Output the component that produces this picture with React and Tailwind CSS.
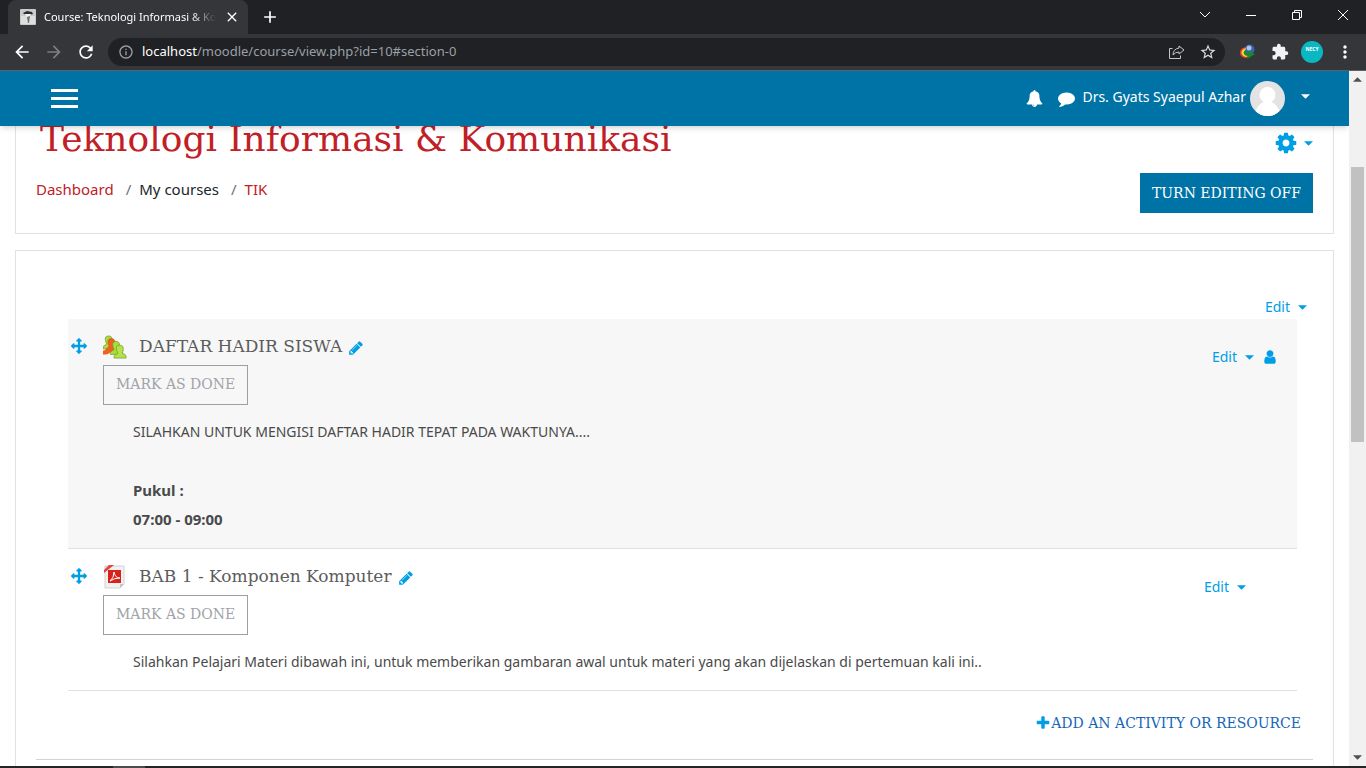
import React from 'react';
import { MdArrowBack, MdArrowForward, MdRefresh, MdInfoOutline, MdStarBorder, MdExtension, MdMoreVert, MdClose, MdAdd } from 'react-icons/md';

const ICONS = {
    cog: 'M1152 896q0-106-75-181t-181-75-181 75-75 181 75 181 181 75 181-75 75-181zm512-109v222q0 12-8 23t-20 13l-185 28q-19 54-39 91 35 50 107 138 10 12 10 25t-9 23q-27 37-99 108t-94 71q-12 0-26-9l-138-108q-44 23-91 38-16 136-29 186-7 28-36 28h-222q-14 0-24.5-8.5t-11.5-21.5l-28-184q-49-16-90-37l-141 107q-10 9-25 9-14 0-25-11-126-114-165-168-7-10-7-23 0-12 8-23 15-21 51-66.5t54-70.5q-27-50-41-99l-183-27q-13-2-21-12.5t-8-23.5v-222q0-12 8-23t19-13l186-28q14-46 39-92-40-57-107-138-10-12-10-24 0-10 9-23 26-36 98.5-107.5t94.5-71.5q13 0 26 10l138 107q44-23 91-38 16-136 29-186 7-28 36-28h222q14 0 24.5 8.5t11.5 21.5l28 184q49 16 90 37l142-107q9-9 24-9 13 0 25 10 129 119 165 170 7 8 7 22 0 12-8 23-15 21-51 66.5t-54 70.5q26 50 41 98l183 28q13 2 21 12.5t8 23.5z',
    pencil: 'M491 1536l91-91-235-235-91 91v107h128v128h107zm523-928q0-22-22-22-10 0-17 7l-542 542q-7 7-7 17 0 22 22 22 10 0 17-7l542-542q7-7 7-17zm-54-192l416 416-832 832h-416v-416zm683 96q0 53-37 90l-166 166-416-416 166-165q36-38 90-38 53 0 91 38l235 234q37 39 37 91z',
    user: 'M1536 1399q0 109-62.5 187t-150.5 78h-854q-88 0-150.5-78t-62.5-187q0-85 8.5-160.5t31.5-152 58.5-131 94-89 134.5-34.5q131 128 313 128t313-128q76 0 134.5 34.5t94 89 58.5 131 31.5 152 8.5 160.5zm-256-887q0 159-112.5 271.5t-271.5 112.5-271.5-112.5-112.5-271.5 112.5-271.5 271.5-112.5 271.5 112.5 112.5 271.5z',
    plus: 'M1600 736v192q0 40-28 68t-68 28h-416v416q0 40-28 68t-68 28h-192q-40 0-68-28t-28-68v-416h-416q-40 0-68-28t-28-68v-192q0-40 28-68t68-28h416v-416q0-40 28-68t68-28h192q40 0 68 28t28 68v416h416q40 0 68 28t28 68z',
    arrows: 'M1792 896q0 26-19 45l-256 256q-19 19-45 19t-45-19-19-45v-128h-384v384h128q26 0 45 19t19 45-19 45l-256 256q-19 19-45 19t-45-19l-256-256q-19-19-19-45t19-45 45-19h128v-384h-384v128q0 26-19 45t-45 19-45-19l-256-256q-19-19-19-45t19-45l256-256q19-19 45-19t45 19 19 45v128h384v-384h-128q-26 0-45-19t-19-45 19-45l256-256q19-19 45-19t45 19l256 256q19 19 19 45t-19 45-45 19h-128v384h384v-128q0-26 19-45t45-19 45 19l256 256q19 19 19 45z',
    bell: 'M912 1696q0-16-16-16-59 0-101.5-42.5t-42.5-101.5q0-16-16-16t-16 16q0 73 51.5 124.5t124.5 51.5q16 0 16-16zm816-288q0 52-38 90t-90 38h-448q0 106-75 181t-181 75-181-75-75-181h-448q-52 0-90-38t-38-90q50-42 91-88t85-119.5 74.5-158.5 50-206 19.5-260q0-152 117-282.5t307-158.5q-8-19-8-39 0-40 28-68t68-28 68 28 28 68q0 20-8 39 190 28 307 158.5t117 282.5q0 139 19.5 260t50 206 74.5 158.5 85 119.5 91 88z',
    comment: 'M1792 896q0 174-120 321.5t-326 233-450 85.5q-70 0-145-8-198 175-460 242-49 14-114 22-17 2-30.5-9t-17.5-29v-1q-3-4-.5-12t2-10 4.5-9.5l6-9 7-8.5 8-9q7-8 31-34.5t34.5-38 31-39.5 32.5-51 27-59 26-76q-157-89-247.5-220t-90.5-281q0-130 71-248.5t191-204.5 286-136.5 348-50.5q244 0 450 85.5t326 233 120 321.5z',
};

function Icon({ name, className }) {
    return (
        <svg viewBox="0 0 1792 1792" fill="currentColor" aria-hidden="true" className={className}>
            <path d={ICONS[name]} />
        </svg>
    );
}

function Caret() {
    return (
        <svg viewBox="0 0 10 5" fill="currentColor" aria-hidden="true" className="w-[9px] h-[5px] shrink-0">
            <path d="M0 0h10L5 5z" />
        </svg>
    );
}

function TabStrip() {
    return (
        <div className="flex h-[34px] shrink-0 items-stretch bg-[#202124] pl-2 text-white">
            <div className="flex w-60 items-center gap-2 rounded-t-lg bg-[#35363a] pl-3 pr-2">
                <svg viewBox="0 0 16 16" className="size-4 shrink-0">
                    <rect width="16" height="16" rx="1" fill="#c9c9c9" />
                    <rect x="1" y="7" width="14" height="8" fill="#dedede" />
                    <path d="M3 4l4-2 5 1 1 2-4 1-5-1z" fill="#2e2e2e" />
                    <path d="M5 5l1 2 2 1 2-1 1-2z" fill="#f4f4f4" />
                    <path d="M7 8l3-1-1 7H8z" fill="#6f6f6f" />
                </svg>
                <span className="flex-1 overflow-hidden whitespace-nowrap text-[11px] mask-r-from-85%">
                    Course: Teknologi Informasi &amp; Komunikasi
                </span>
                <button aria-label="Close tab"><MdClose className="size-4" /></button>
            </div>
            <button aria-label="New tab" className="px-3"><MdAdd className="size-5" /></button>
            <div className="ml-auto flex items-center pb-1">
                <button aria-label="Search tabs" className="grid w-[46px] place-items-center">
                    <svg viewBox="0 0 12 12" className="size-3" fill="none" stroke="currentColor"><path d="M1 3l5 5 5-5" /></svg>
                </button>
                <button aria-label="Minimize" className="grid w-[46px] place-items-center">
                    <svg viewBox="0 0 10 10" className="size-[10px]" fill="none" stroke="currentColor"><path d="M0 5.5h10" /></svg>
                </button>
                <button aria-label="Restore" className="grid w-[46px] place-items-center">
                    <svg viewBox="0 0 10 10" className="size-[10px]" fill="none" stroke="currentColor"><path d="M.5 2.5h7v7h-7zM2.500 2.500v-2h7v7h-2" /></svg>
                </button>
                <button aria-label="Close" className="grid w-[46px] place-items-center">
                    <svg viewBox="0 0 10 10" className="size-[10px]" fill="none" stroke="currentColor"><path d="M0 0l10 10M10 0L0 10" /></svg>
                </button>
            </div>
        </div>
    );
}

function Toolbar() {
    return (
        <div className="flex h-[37px] shrink-0 items-center border-b border-[#5f6065] bg-[#35363a] pl-3 pr-[11px] text-white">
            <button aria-label="Back"><MdArrowBack className="size-5" /></button>
            <button aria-label="Forward" className="ml-3 text-[#7d7e81]"><MdArrowForward className="size-5" /></button>
            <button aria-label="Reload" className="ml-3"><MdRefresh className="size-5" /></button>
            <div className="ml-3 flex h-7 flex-1 items-center rounded-full bg-[#202124] pl-[10px] pr-2 text-[#9aa0a6]">
                <MdInfoOutline className="size-4" />
                <a href="#section-0" className="ml-2 flex-1 text-[13px]">
                    <span className="text-white">localhost</span>/moodle/course/view.php?id=10#section-0
                </a>
                <svg viewBox="0 0 16 16" className="size-4 text-[#c4c7ca]" fill="none" stroke="currentColor">
                    <path d="M3.500 4.500h-3v10h11v-3" />
                    <path d="M10 2l5 4-5 4V8Q6 8 4 11q0-6 6-7z" />
                </svg>
                <MdStarBorder className="ml-[14px] size-[18px] text-[#dadce0]" />
            </div>
            <svg viewBox="0 0 16 16" className="ml-[14px] size-4">
                <circle cx="10.500" cy="5.500" r="5" fill="#3a63ad" />
                <circle cx="10" cy="4" r="2.500" fill="#a9c8ee" />
                <path d="M7 3Q0 4 1 10q1 4 7 4l1-2Q3 11 7 3z" fill="#e03c2d" />
                <path d="M7 4Q2 5 2.500 9.500 4 13 8 13l1-2Q4 10 7 4z" fill="#f2d23a" />
                <path d="M7 6Q4 7 5 10q1 2 4 2l-1 3 8-5-7-3v2Q7 9 7 6z" fill="#178a2c" />
            </svg>
            <MdExtension className="ml-4 size-[18px] text-[#f1f3f4]" />
            <button
                aria-label="Profile"
                className="ml-3 grid size-[22px] place-items-center rounded-full bg-[#0cb7c4] pb-1 text-[5px] font-bold"
            >
                NECY
            </button>
            <button aria-label="Menu" className="ml-3"><MdMoreVert className="size-5" /></button>
        </div>
    );
}

function Navbar() {
    return (
        <nav className="relative z-10 flex h-[55px] shrink-0 items-center bg-[#0073a6] pl-[51px] pr-[39px] text-white shadow-md">
            <button aria-label="Side panel" className="flex w-[27px] flex-col gap-[5px]">
                <span className="h-[3px] bg-white" />
                <span className="h-[3px] bg-white" />
                <span className="h-[3px] bg-white" />
            </button>
            <button aria-label="Notifications" className="ml-auto"><Icon name="bell" className="size-[17px]" /></button>
            <button aria-label="Messages" className="ml-[15px]"><Icon name="comment" className="size-[17px]" /></button>
            <button className="ml-[7px] flex items-center text-sm">
                <span className="pb-1">Drs. Gyats Syaepul Azhar</span>
                <svg viewBox="0 0 35 35" className="ml-1 mr-4 size-[35px] rounded-full">
                    <rect width="35" height="35" fill="#e3e3e3" />
                    <circle cx="17.500" cy="14" r="8" fill="#fff" />
                    <path d="M5 31q4-9 9-10h7q5 1 9 10v4H5z" fill="#fff" />
                </svg>
                <span className="pb-1"><Caret /></span>
            </button>
        </nav>
    );
}

function PageHeader() {
    return (
        <header className="-mt-[10px] border border-[#dee2e6] px-5 pb-5">
            <div className="flex items-start justify-between">
                <h1 className="pl-1 font-['DejaVu_Serif',serif] text-[36px] leading-[44px] text-[#c12026]">
                    Teknologi Informasi &amp; Komunikasi
                </h1>
                <button aria-label="Actions menu" className="mt-[14px] flex items-center gap-[6px] text-[#009ee7]">
                    <Icon name="cog" className="size-6" />
                    <Caret />
                </button>
            </div>
            <div className="mt-3 flex items-start justify-between">
                <nav aria-label="Breadcrumb" className="flex gap-2 text-[15px] leading-8">
                    <a href="#dashboard" className="mr-1 text-[#c12026]">Dashboard</a>
                    <span className="text-gray-500">/</span>
                    <span className="mr-1 text-[#212529]">My courses</span>
                    <span className="text-gray-500">/</span>
                    <a href="#tik" className="text-[#c12026]">TIK</a>
                </nav>
                <button className="h-10 bg-[#0073a6] px-3 font-['DejaVu_Serif',serif] text-sm text-white">TURN EDITING OFF</button>
            </div>
        </header>
    );
}

function EditMenu() {
    return (
        <button className="flex items-center gap-2 text-sm leading-6 text-[#009ee7]">
            Edit
            <Caret />
        </button>
    );
}

function RosterIcon() {
    const person = 'M0 14v-2q1-2 4-3-4-9 2-9t3 9q4 1 4 3v2z';
    return (
        <svg viewBox="0 0 26 26" className="size-6" strokeWidth="0.8">
            <path d={person} transform="translate(0 1)" fill="#a9dc3c" stroke="#6f9f22" />
            <path d={person} transform="translate(3 4)" fill="#f0601e" stroke="#c84d14" />
            <path d="M0 17q6-1 6-5l4 4q-3 6-10 5z" fill="#f0601e" />
            <path d={person} transform="translate(8 7)" fill="#a9dc3c" stroke="#6f9f22" />
            <path d={person} transform="translate(12 11)" fill="#b4e24c" stroke="#6f9f22" />
        </svg>
    );
}

function PdfIcon() {
    return (
        <svg viewBox="0 0 24 24" className="size-6">
            <path d="M2 1h19v18l-4 4H2z" fill="#f1f1f1" stroke="#d2d2d2" />
            <path d="M17 23v-4h4z" fill="#c4c4c4" />
            <path d="M1 8V5l5-5h5z" fill="#e2453a" />
            <path d="M5 5h13v13H5z" fill="#d8231d" />
            <path d="M7 16q4-3 4-9 1 6 6 6-6 0-10 3z" fill="none" stroke="#fff" />
        </svg>
    );
}

function Activity({ icon, title, actions, className, children }) {
    return (
        <li className={`flex items-start border-b border-[#dee2e6] pl-[3px] pt-4 pb-[14px] ${className}`}>
            <button aria-label="Move" className="mt-[3px] text-[#009ee7]"><Icon name="arrows" className="size-4" /></button>
            <div className="ml-4 flex-1">
                <div className="flex h-6 items-center">
                    {icon}
                    <a href="#activity" className="ml-3 pb-[2px] font-['DejaVu_Serif',serif] text-[17px] leading-6 text-[#5c5c5c]">
                        {title}
                    </a>
                    <button aria-label="Edit title" className="ml-[6px] mt-[2px] text-[#009ee7]">
                        <Icon name="pencil" className="size-4" />
                    </button>
                </div>
                <button className="mt-[6px] h-10 border border-[#9aa0a6] px-3 pb-[2px] font-['DejaVu_Serif',serif] text-sm text-[#a0a3a8]">
                    MARK AS DONE
                </button>
                <div className="ml-[30px] mt-3 text-sm leading-[29px] text-[#4a4a4a]">{children}</div>
            </div>
            <div className="mt-[10px] flex items-center gap-2">{actions}</div>
        </li>
    );
}

function CourseContent() {
    return (
        <main className="mt-4 border border-[#dee2e6] px-5 pt-11">
            <div className="flex justify-end pr-[6px]"><EditMenu /></div>
            <ul className="ml-8 mr-4">
                <Activity
                    className="bg-[#f7f7f7] pr-[19px]"
                    title="DAFTAR HADIR SISWA"
                    icon={<RosterIcon />}
                    actions={(
                        <>
                            <EditMenu />
                            <Icon name="user" className="size-4 text-[#009ee7]" />
                        </>
                    )}
                >
                    <p>SILAHKAN UNTUK MENGISI DAFTAR HADIR TEPAT PADA WAKTUNYA....</p>
                    <p className="mt-[30px] text-[15px] leading-[29px] font-bold">Pukul :</p>
                    <p className="text-[15px] leading-[29px] font-bold">07:00 - 09:00</p>
                </Activity>
                <Activity className="pr-[51px]" title="BAB 1 - Komponen Komputer" icon={<PdfIcon />} actions={<EditMenu />}>
                    <p>
                        Silahkan Pelajari Materi dibawah ini, untuk memberikan gambaran awal untuk materi yang akan
                        dijelaskan di pertemuan kali ini..
                    </p>
                </Activity>
            </ul>
            <div className="flex justify-end border-b border-[#d0d4d8] pb-6 pr-3 pt-5">
                <button className="flex items-center font-['DejaVu_Serif',serif] text-sm leading-6 text-[#1566b7]">
                    <Icon name="plus" className="size-4 text-[#009ee7]" />
                    ADD AN ACTIVITY OR RESOURCE
                </button>
            </div>
            <div className="h-20" />
        </main>
    );
}

function Scrollbar() {
    return (
        <div className="flex w-[17px] shrink-0 flex-col items-center bg-[#f1f1f1] py-1.5 text-[#505050]">
            <span className="rotate-180"><Caret /></span>
            <div className="mt-[85px] h-[275px] w-[13px] bg-[#c1c1c1]" />
            <span className="mt-auto"><Caret /></span>
        </div>
    );
}

export default function App() {
    return (
        <div className="flex h-screen flex-col overflow-hidden bg-white font-['Noto_Sans',sans-serif]">
            <TabStrip />
            <Toolbar />
            <div className="flex min-h-0 flex-1">
                <div className="flex min-w-0 flex-1 flex-col overflow-hidden">
                    <Navbar />
                    <div className="min-h-0 flex-1 overflow-hidden px-[15px]">
                        <PageHeader />
                        <CourseContent />
                    </div>
                </div>
                <Scrollbar />
            </div>
            <div className="h-[2px] shrink-0 bg-[#252525] pl-[113px]">
                <div className="h-full w-8 bg-[#4d4d4d]" />
            </div>
        </div>
    );
}
